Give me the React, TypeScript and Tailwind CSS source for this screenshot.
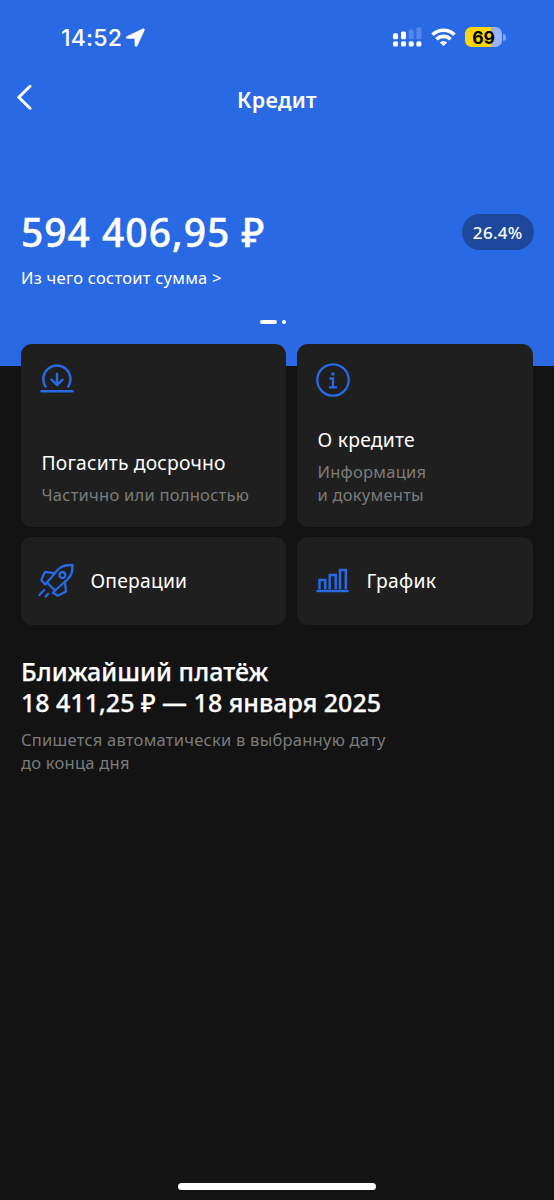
import type { ReactNode } from "react";

function StatusBar() {
  return (
    <div className="flex h-[74px] items-center pl-[61px] pr-[48.500px]">
      <span className="mt-[2px] font-['Inter',sans-serif] text-[23px] font-medium leading-none tracking-[0.200px] text-white">14:52</span>
      <svg className="ml-[4px] mt-px" width="19" height="19" viewBox="0 0 19 19" fill="white">
        <path d="M.8 8.600 16.600.900c1.200-.6 2.200.3 1.700 1.500L11.200 17.700c-.6 1.200-2.300.9-2.300-.4V11c0-.4-.2-.6-.6-.6H1.300C0 10.400-.3 9.100.8 8.600Z" stroke="white" strokeWidth=".5" />
      </svg>
      <div className="ml-auto flex items-center">
        <svg width="30" height="20" viewBox="0 0 30 20" fill="white">
          <rect x="1" y="6.200" width="5" height="6" rx="1.500" />
          <rect x="9" y="4.500" width="5" height="7.700" rx="1.500" />
          <rect x="16.700" y="2.500" width="5" height="9.700" rx="1.500" opacity=".2" />
          <rect x="24.400" y=".3" width="5" height="11.900" rx="1.500" opacity=".2" />
          <rect x="1" y="14.300" width="5" height="5.200" rx="1.500" />
          <rect x="9" y="14.300" width="5" height="5.200" rx="1.500" />
          <rect x="16.700" y="14.300" width="5" height="5.200" rx="1.500" />
          <rect x="24.400" y="14.300" width="5" height="5.200" rx="1.500" />
        </svg>
        <svg className="ml-[9px]" width="25" height="19" viewBox="0 0 26 19" fill="none" stroke="white" strokeWidth="3.700">
          <path d="M1.600 6.700a16.200 16.200 0 0 1 22.800 0" />
          <path d="M5.700 11.300a10.400 10.400 0 0 1 14.600 0" />
          <path d="M13 18.400 9.200 14.700a5.400 5.400 0 0 1 7.600 0Z" fill="white" stroke="none" />
        </svg>
        <div className="ml-[9px] flex h-5 w-[37px] items-center justify-center rounded-[6.500px] bg-[linear-gradient(90deg,#ffd60a_69%,#99b3f0_69%)]">
          <span className="mt-px font-['Inter',sans-serif] text-[17.500px] font-bold leading-none text-black">69</span>
        </div>
        <div className="ml-px h-[7px] w-[2.500px] rounded-r-full bg-[#7fa2ee]" />
      </div>
    </div>
  );
}

function RepayIcon() {
  return (
    <svg width="34" height="30" viewBox="0 0 34 30" fill="none" stroke="#2969e3" strokeWidth="2.400" strokeLinecap="round" strokeLinejoin="round">
      <path d="M5.600 22.600a13.600 13.600 0 1 1 22.600 0" />
      <path d="M17 9.800v11.100M11.500 15.600l5.500 5.500 5.500-5.500" />
      <path d="M1.500 27.300h31" />
    </svg>
  );
}

function InfoIcon() {
  return (
    <svg width="34" height="34" viewBox="0 0 34 34" fill="none" stroke="#2969e3" strokeWidth="2.300">
      <circle cx="17" cy="17" r="15.700" />
      <path d="M13.500 15.500H17v8.400M13 24.300h8" />
      <circle cx="17" cy="11" r="1.800" fill="#2969e3" stroke="none" />
    </svg>
  );
}

function RocketIcon() {
  return (
    <svg width="36" height="36" viewBox="0 0 36 36" fill="none" stroke="#2969e3" strokeWidth="2.300" strokeLinecap="round" strokeLinejoin="round">
      <path d="M9 19.500 19.500 7C24 2 29 1.800 34.500 2c.1 6-.4 10.500-5.200 14.700L17 27.500Z" />
      <path d="M16 10.200 7 8.800 3.300 17l3.900 4.600L9 19.500" />
      <path d="M27 19l.9 9.500L19.700 32.800l-4.600-3 2.600-3.200" />
      <circle cx="24.400" cy="12" r="3" />
      <path d="M6.200 27 1.400 32M10.200 30.800 7.600 33.600" />
    </svg>
  );
}

function ChartIcon() {
  return (
    <svg width="33" height="26" viewBox="0 0 33 26" fill="none" stroke="#2969e3" strokeWidth="2.500">
      <path d="M3.500 21.200v-9.100h5.700v9.100M13.700 21.200V6.900h6v14.300M24 21.200V1.900h5.800v19.300" />
      <path d="M1.500 23.100h30" strokeLinecap="round" />
    </svg>
  );
}

function Card({ className, children }: { className: string; children: ReactNode }) {
  return <button className={`flex rounded-[11px] bg-[#1f1f1f] text-left ${className}`}>{children}</button>;
}

export default function App() {
  return (
    <div className="min-h-[1200px] w-full overflow-hidden bg-[#131313] font-['Noto_Sans',sans-serif] whitespace-nowrap text-white">
      <header className="flex h-[366px] flex-col bg-[#2969e3]">
        <StatusBar />
        <div className="grid h-[52px] grid-cols-[60px_1fr_60px] items-center">
          <svg className="-mt-1.5 ml-4" width="18" height="26" viewBox="0 0 18 26" fill="none" stroke="white" strokeWidth="3" strokeLinecap="round" strokeLinejoin="round">
            <path d="M14 2.300 2.800 13.300 14 24.200" />
          </svg>
          <h1 className="text-center text-[21.500px] font-semibold leading-7 tracking-[0.350px]">Кредит</h1>
        </div>
        <div className="mt-[82px] flex items-start justify-between pl-[21px] pr-[20.500px]">
          <p className="text-[39px] font-medium leading-[48px] tracking-[1px] [-webkit-text-stroke:0.400px_white]">594 406,95 ₽</p>
          <span className="mt-[5.500px] flex h-9 w-[71.500px] items-center justify-center rounded-full bg-[#1e489c] pt-[1.500px] text-[17px] font-medium leading-none tracking-[0.300px]">26.4%</span>
        </div>
        <p className="mt-[9.500px] pl-[21px] text-[16.500px] leading-6 tracking-[0.250px]">Из чего состоит сумма &gt;</p>
        <div className="mt-[30.500px] flex items-center gap-[5px] pl-[260px]">
          <i className="h-1 w-[17px] rounded-full bg-white" />
          <i className="size-1 rounded-full bg-white" />
        </div>
      </header>

      <section className="-mt-[22px] grid grid-cols-[265.300px_236.200px] grid-rows-[182.500px_87.500px] gap-x-[10.700px] gap-y-[10.500px] pl-[21px]">
        <Card className="flex-col items-start pb-[21px] pl-[19px] pt-[20px]">
          <RepayIcon />
          <span className="mt-auto pl-[1.500px] text-[19.300px] leading-7 tracking-[0.180px]">Погасить досрочно</span>
          <span className="mt-[5.500px] pl-[1.500px] text-[16.500px] leading-[23px] tracking-[0.250px] text-[#7b7b7b]">Частично или полностью</span>
        </Card>
        <Card className="flex-col items-start pb-[21px] pl-[19px] pt-[19px]">
          <InfoIcon />
          <span className="mt-auto pl-[1.500px] text-[19.300px] leading-7 tracking-[0.250px]">О кредите</span>
          <span className="mt-[5.500px] pl-[1.500px] text-[16.500px] leading-[23px] tracking-[0.250px] text-[#7b7b7b]">Информация<br />и документы</span>
        </Card>
        <Card className="items-center pl-[17px]">
          <RocketIcon />
          <span className="ml-[16.500px] text-[19.300px] leading-7 tracking-[0.200px]">Операции</span>
        </Card>
        <Card className="items-center pl-[19.500px]">
          <ChartIcon />
          <span className="ml-[17px] text-[19.300px] leading-7 tracking-[0.300px]">График</span>
        </Card>
      </section>

      <section className="mt-[31px] pl-[21px]">
        <h2 className="text-[25px] font-medium leading-[31px] [-webkit-text-stroke:0.250px_white]">
          <span className="block tracking-[0.060px]">Ближайший платёж</span>
          <span className="block">18 411,25 ₽ — 18 января 2025</span>
        </h2>
        <p className="mt-[10px] text-[16.500px] leading-[23px] tracking-[0.250px] text-[#7b7b7b]">Спишется автоматически в выбранную дату<br />до конца дня</p>
      </section>

      <footer className="mt-[409.500px] flex justify-center">
        <div className="h-[6.500px] w-[198.500px] rounded-full bg-white" />
      </footer>
    </div>
  );
}
